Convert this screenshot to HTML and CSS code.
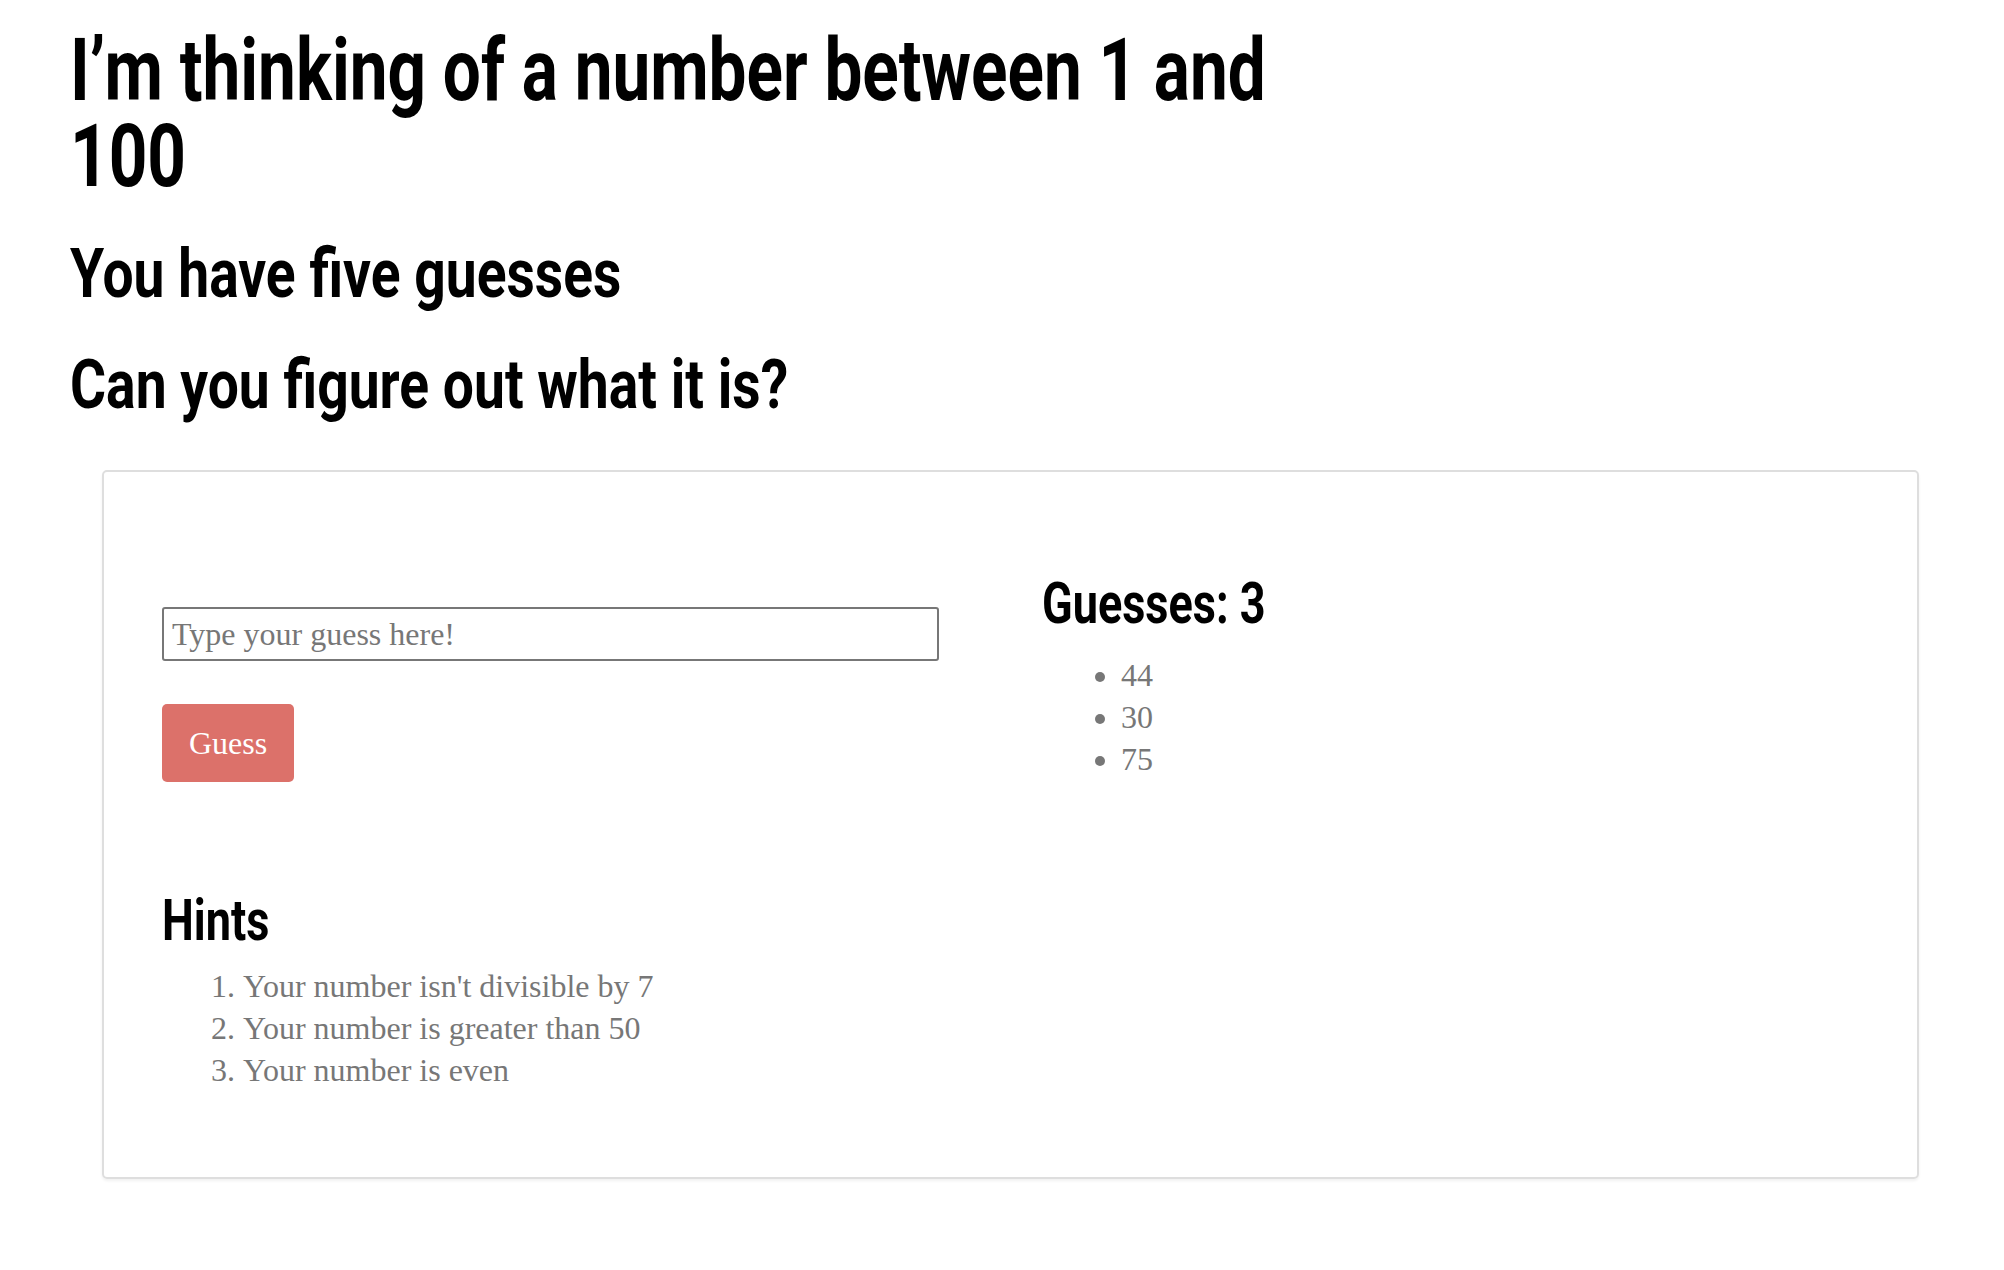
FILE: index.html
```html
<!DOCTYPE html>
<html lang="en">
<head>
<meta charset="utf-8">
<title>Guess the number</title>
<link rel="stylesheet" href="styles.css">
</head>
<body>
<header class="intro">
  <h1 class="title">I’m thinking of a number between 1 and 100</h1>
  <h2 class="subtitle">You have five guesses</h2>
  <h2 class="subtitle">Can you figure out what it is?</h2>
</header>
<main class="card">
  <section class="play">
    <form class="guess-form">
      <input class="guess-input" type="text" placeholder="Type your guess here!">
      <button class="guess-btn" type="button">Guess</button>
    </form>
    <div class="hints">
      <h3 class="section-title">Hints</h3>
      <ol class="hint-list">
        <li>Your number isn't divisible by 7</li>
        <li>Your number is greater than 50</li>
        <li>Your number is even</li>
      </ol>
    </div>
  </section>
  <section class="history">
    <h3 class="section-title">Guesses: 3</h3>
    <ul class="guess-list">
      <li>44</li>
      <li>30</li>
      <li>75</li>
    </ul>
  </section>
</main>
</body>
</html>
```
FILE: styles.css
```css
html, body {
  margin: 0;
  padding: 0;
  background: #fff;
}
body {
  padding: 0 70px;
  font-family: "Liberation Serif", "DejaVu Serif", serif;
  color: #777;
}
.title, .subtitle, .section-title {
  font-family: Roboto, "Liberation Sans", sans-serif;
  font-weight: 700;
  color: #000;
  margin: 0;
  transform-origin: left center;
}
.title {
  font-size: 87px;
  line-height: 86px;
  margin-top: 27px;
  padding-bottom: 4px;
  width: 1600px;
  transform: scaleX(0.775);
}
.subtitle {
  font-size: 69px;
  line-height: 80px;
  margin-top: 31px;
  white-space: nowrap;
  transform: scaleX(0.8);
}
.card {
  margin: 45px 15px 60px 32px;
  border: 2px solid #dedede;
  border-radius: 5px;
  box-shadow: 0 2px 3px rgba(0,0,0,0.06);
  padding: 102px 0 86px 58px;
  display: grid;
  grid-template-columns: 880px 1fr;
}
.guess-form {
  display: flex;
  flex-direction: column;
  align-items: flex-start;
  gap: 43px;
  padding-top: 33px;
}
.guess-input {
  width: 777px;
  height: 54px;
  box-sizing: border-box;
  border: 2px solid #777;
  border-radius: 3px;
  padding: 0 8px;
  font-family: "Liberation Serif", "DejaVu Serif", serif;
  font-size: 32px;
  color: #333;
}
.guess-input::placeholder {
  color: #777;
}
.guess-btn {
  width: 132px;
  height: 78px;
  border: none;
  border-radius: 5px;
  background: #dc716a;
  color: #fff;
  font-family: "Liberation Serif", "DejaVu Serif", serif;
  font-size: 32px;
  padding: 0;
}
.hints {
  margin-top: 109px;
}
.section-title {
  font-size: 57px;
  line-height: 60px;
  white-space: nowrap;
  transform: scaleX(0.79);
}
.hint-list {
  margin: 14px 0 0;
  padding-left: 81px;
  font-size: 32px;
  line-height: 42px;
}
.guess-list {
  margin: 20px 0 0;
  padding-left: 79px;
  font-size: 32px;
  line-height: 42px;
}
```
